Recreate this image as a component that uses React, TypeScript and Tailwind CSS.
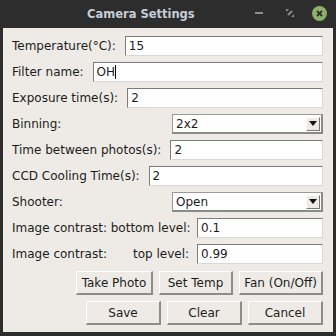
import React from "react";

const font = { fontFamily: '"DejaVu Sans", Verdana, sans-serif' };

function Entry({ value, cursor }: { value: string; cursor?: boolean }) {
  return (
    <div className="flex-1 h-[20px] bg-white border border-t-[#7c7c7c] border-l-[#7c7c7c] border-b-[#d8d8d8] border-r-[#d8d8d8] flex items-center pl-[3px] text-[12px] leading-none">
      <span>{value}</span>
      {cursor && <span className="w-px h-[14px] bg-black" />}
    </div>
  );
}

function Combo({ value }: { value: string }) {
  return (
    <div className="w-[151px] h-[20px] bg-white border-t border-l border-t-[#9a9a9a] border-l-[#9a9a9a] border-b-2 border-r-2 border-b-[#8a8a8a] border-r-[#8a8a8a] flex items-center pl-[3px] text-[12px] leading-none">
      <span className="flex-1">{value}</span>
      <div className="w-[14px] h-[14px] mr-[1px] bg-[#eeebe7] border border-t-white border-l-white border-b-[#777] border-r-[#777] flex items-center justify-center">
        <svg width="8" height="5" viewBox="0 0 8 5">
          <path d="M0 0h8L4 5z" fill="#111" />
        </svg>
      </div>
    </div>
  );
}

function Btn({ label, w }: { label: string; w: string }) {
  return (
    <div
      className={`${w} h-[24px] bg-[#eeebe7] border-t border-l border-t-white border-l-white border-b-2 border-r-2 border-b-[#8c8c8c] border-r-[#8c8c8c] flex items-center justify-center text-[12px] leading-none`}
    >
      {label}
    </div>
  );
}

function Row({ label, children }: { label: React.ReactNode; children: React.ReactNode }) {
  return (
    <div className="flex items-center h-[20px]">
      {label}
      {children}
    </div>
  );
}

export default function App() {
  return (
    <div className="w-[336px] h-[336px] bg-[#2d2d2d] flex flex-col text-[#1c1c1c]" style={font}>
      {/* title bar */}
      <div className="h-[28px] flex items-center relative">
        <span className="absolute left-[87px] top-[6px] text-[11.5px] font-bold text-[#c5cdd8]">Camera Settings</span>
        <div className="absolute left-[255px] top-[12px] w-[8px] h-[2px] bg-[#8d8d8d]" />
        <svg className="absolute left-[286px] top-[9px]" width="8" height="8" viewBox="0 0 8 8">
          <path d="M0 3L3 0H0zM8 5L5 8H8z" fill="#8d8d8d" />
          <path d="M2 6L6 2" stroke="#8d8d8d" strokeWidth="2" />
        </svg>
        <div className="absolute left-[312px] top-[6px] w-[15px] h-[15px] rounded-full bg-[#8db06a] flex items-center justify-center">
          <svg width="7" height="7" viewBox="0 0 7 7">
            <path d="M1 1L6 6M6 1L1 6" stroke="#2d2d2d" strokeWidth="1.8" />
          </svg>
        </div>
      </div>

      {/* body */}
      <div className="flex-1 mx-[3px] mb-[4px] bg-[#eeebe7] pl-[9px] pr-[10px] pt-[8px] flex flex-col gap-[6px] text-[12px] whitespace-nowrap">
        <Row label={<span className="shrink-0 mr-[9px]">Temperature(°C):</span>}>
          <Entry value="15" />
        </Row>
        <Row label={<span className="shrink-0 mr-[9px]">Filter name:</span>}>
          <Entry value="OH" cursor />
        </Row>
        <Row label={<span className="shrink-0 mr-[9px]">Exposure time(s):</span>}>
          <Entry value="2" />
        </Row>
        <Row label={<span className="flex-1">Binning:</span>}>
          <Combo value="2x2" />
        </Row>
        <Row label={<span className="shrink-0 mr-[9px]">Time between photos(s):</span>}>
          <Entry value="2" />
        </Row>
        <Row label={<span className="shrink-0 mr-[9px]">CCD Cooling Time(s):</span>}>
          <Entry value="2" />
        </Row>
        <Row label={<span className="flex-1">Shooter:</span>}>
          <Combo value="Open" />
        </Row>
        <Row label={<span className="shrink-0 w-[185px]">Image contrast: bottom level:</span>}>
          <Entry value="0.1" />
        </Row>
        <Row
          label={
            <span className="shrink-0 w-[185px] flex">
              <span className="w-[121px]">Image contrast:</span>
              <span>top level:</span>
            </span>
          }
        >
          <Entry value="0.99" />
        </Row>

        <div className="flex justify-end gap-[6px] mt-[1px]">
          <Btn label="Take Photo" w="w-[77px]" />
          <Btn label="Set Temp" w="w-[74px]" />
          <Btn label="Fan (On/Off)" w="w-[84px]" />
        </div>
        <div className="flex justify-end gap-[6px]">
          <Btn label="Save" w="w-[75px]" />
          <Btn label="Clear" w="w-[75px]" />
          <Btn label="Cancel" w="w-[75px]" />
        </div>
      </div>
    </div>
  );
}
